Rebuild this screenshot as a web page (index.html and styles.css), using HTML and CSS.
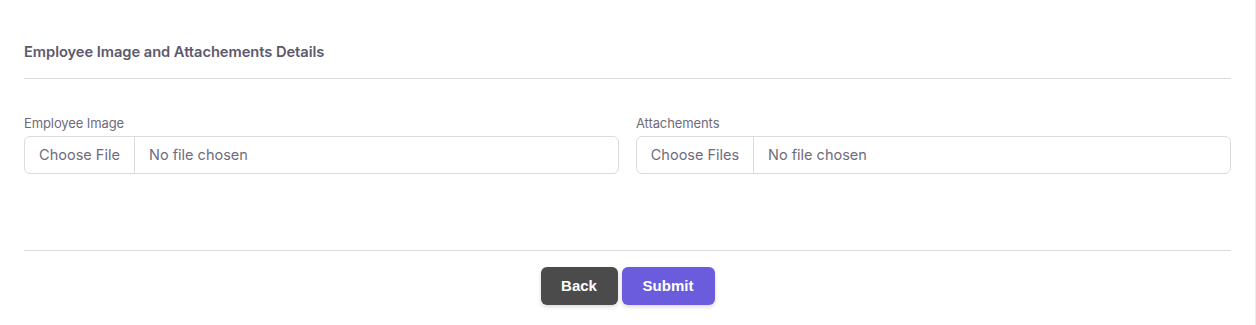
FILE: index.html
```html
<!DOCTYPE html>
<html>
<head>
<meta charset="utf-8">
<link rel="stylesheet" href="styles.css">
</head>
<body>
<div class="card">
  <h5 class="title">Employee Image and Attachements Details</h5>
  <hr class="divider">
  <div class="row">
    <div class="field">
      <label class="label">Employee Image</label>
      <div class="file">
        <span class="file-btn">Choose File</span>
        <span class="file-text">No file chosen</span>
      </div>
    </div>
    <div class="field">
      <label class="label">Attachements</label>
      <div class="file">
        <span class="file-btn wide">Choose Files</span>
        <span class="file-text">No file chosen</span>
      </div>
    </div>
  </div>
  <hr class="divider footer-divider">
  <div class="actions">
    <button class="btn btn-back">Back</button>
    <button class="btn btn-submit">Submit</button>
  </div>
</div>
</body>
</html>
```
FILE: styles.css
```css
* { box-sizing: border-box; }
html, body { margin: 0; padding: 0; background: #fff; }
body { font-family: "Inter", "Noto Sans", sans-serif; color: #6f6b7d; }
.card {
  width: 1256px;
  height: 325px;
  border-right: 1px solid #ececec;
  padding: 42px 24px 0 24px;
}
.title {
  margin: 0;
  font-size: 14.7px;
  font-weight: 600;
  color: #5d596c;
  line-height: 20px;
  letter-spacing: -0.05px;
}
.divider {
  border: 0;
  border-top: 1px solid #dbdade;
  margin: 16px 0 0 0;
  width: 1207px;
}
.row {
  display: flex;
  gap: 17px;
  margin-top: 36px;
  width: 1207px;
}
.field { flex: 1; }
.label {
  display: block;
  font-size: 13px;
  color: #6f6b7d;
  line-height: 17px;
  margin-bottom: 4px;
  letter-spacing: -0.1px;
}
.file {
  display: flex;
  height: 38px;
  border: 1px solid #dbdade;
  border-radius: 6px;
  font-size: 14.5px;
  color: #6f6b7d;
  align-items: stretch;
}
.file-btn {
  display: flex;
  align-items: center;
  justify-content: center;
  white-space: nowrap;
  flex: none;
  width: 110px;
  border-right: 1px solid #dbdade;
  padding-bottom: 1px;
}
.file-btn.wide { width: 117px; }
.file-text {
  display: flex;
  align-items: center;
  white-space: nowrap;
  padding: 0 14px;
  padding-bottom: 1px;
}
.footer-divider { margin-top: 76px; }
.actions {
  display: flex;
  justify-content: center;
  gap: 4px;
  margin-top: 16px;
  width: 1207px;
}
.btn {
  height: 38px;
  border: 0;
  border-radius: 6px;
  color: #fff;
  font-family: "Liberation Sans", Arial, sans-serif;
  font-weight: 700;
  font-size: 15px;
  padding: 0;
  padding-bottom: 1px;
  box-shadow: 0 2px 4px rgba(0,0,0,0.15);
}
.btn-back { background: #4b4b4b; width: 77px; }
.btn-submit { background: #6a5cdc; width: 93px; }
```
